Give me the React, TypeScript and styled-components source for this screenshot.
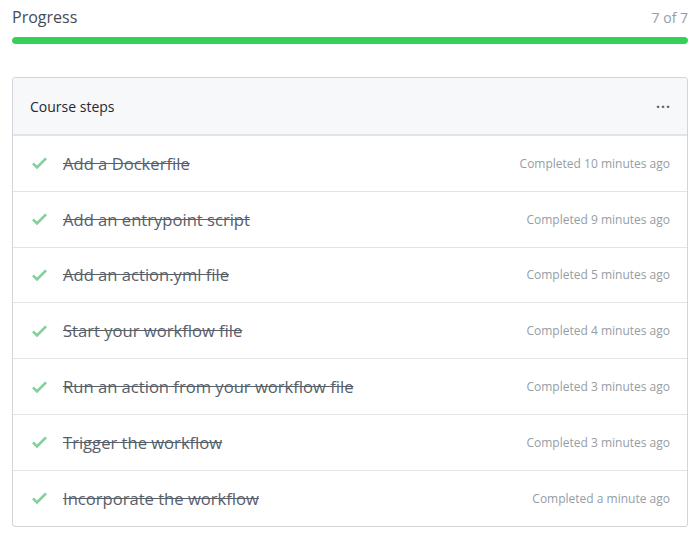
import * as React from 'react';
import styled, { createGlobalStyle } from 'styled-components';

const GlobalStyle = createGlobalStyle`
    body {
        margin: 0;
        background: #fff;
        font-family: "Open Sans", "Noto Sans", sans-serif;
    }
`;

const Page = styled.div`
    padding: 6px 10px 14px 12px;
`;

const ProgressHeader = styled.div`
    display: flex;
    justify-content: space-between;
    align-items: baseline;
    height: 24px;
`;

const ProgressTitle = styled.div`
    font-size: 16px;
    color: #444d56;
`;

const ProgressCount = styled.div`
    font-size: 14px;
    color: #959da5;
`;

const ProgressTrack = styled.div`
    margin-top: 7px;
    height: 7px;
    border-radius: 4px;
    background: #e1e4e8;
    overflow: hidden;
`;

const ProgressFill = styled.div`
    height: 100%;
    background: #34d058;
    border-radius: 4px;
`;

const Card = styled.div`
    margin-top: 33px;
    border: 1px solid #d1d5da;
    border-radius: 3px;
    overflow: hidden;
`;

const CardHeader = styled.div`
    display: flex;
    justify-content: space-between;
    align-items: center;
    height: 56px;
    padding: 0 16px 0 17px;
    background: #f6f8fa;
    border-bottom: 1px solid #e1e4e8;
    font-size: 14px;
    color: #24292e;
`;

const Dots = styled.span`
    color: #586069;
    font-size: 14px;
    font-weight: bold;
    letter-spacing: 1px;
`;

const StepRow = styled.div`
    display: flex;
    align-items: center;
    height: 54.8px;
    padding: 0 17px 0 19px;
    border-top: 1px solid #e1e4e8;

    &:first-of-type {
        border-top: none;
    }
`;

const CheckIcon = styled.svg`
    flex: none;
    width: 15px;
    height: 20px;
    margin-right: 16px;
    fill: #85cf9c;
`;

const StepName = styled.div`
    flex: 1;
    font-size: 16.6px;
    color: #586069;
    text-decoration: line-through;
`;

const StepTime = styled.div`
    font-size: 12px;
    color: #959da5;
`;

interface Step {
    name: string;
    time: string;
}

const steps: Step[] = [
    { name: 'Add a Dockerfile', time: 'Completed 10 minutes ago' },
    { name: 'Add an entrypoint script', time: 'Completed 9 minutes ago' },
    { name: 'Add an action.yml file', time: 'Completed 5 minutes ago' },
    { name: 'Start your workflow file', time: 'Completed 4 minutes ago' },
    { name: 'Run an action from your workflow file', time: 'Completed 3 minutes ago' },
    { name: 'Trigger the workflow', time: 'Completed 3 minutes ago' },
    { name: 'Incorporate the workflow', time: 'Completed a minute ago' },
];

const Check = () => (
    <CheckIcon viewBox="0 0 12 16">
        <path fillRule="evenodd" d="M12 5l-8 8-4-4 1.5-1.5L4 10l6.5-6.5L12 5z" />
    </CheckIcon>
);

export default function App() {
    const done = steps.length;
    return (
        <Page>
            <GlobalStyle />
            <ProgressHeader>
                <ProgressTitle>Progress</ProgressTitle>
                <ProgressCount>{done} of {steps.length}</ProgressCount>
            </ProgressHeader>
            <ProgressTrack>
                <ProgressFill style={{ width: `${(done / steps.length) * 100}%` }} />
            </ProgressTrack>
            <Card>
                <CardHeader>
                    <span>Course steps</span>
                    <Dots>···</Dots>
                </CardHeader>
                {steps.map(s => (
                    <StepRow key={s.name}>
                        <Check />
                        <StepName>{s.name}</StepName>
                        <StepTime>{s.time}</StepTime>
                    </StepRow>
                ))}
            </Card>
        </Page>
    );
}
